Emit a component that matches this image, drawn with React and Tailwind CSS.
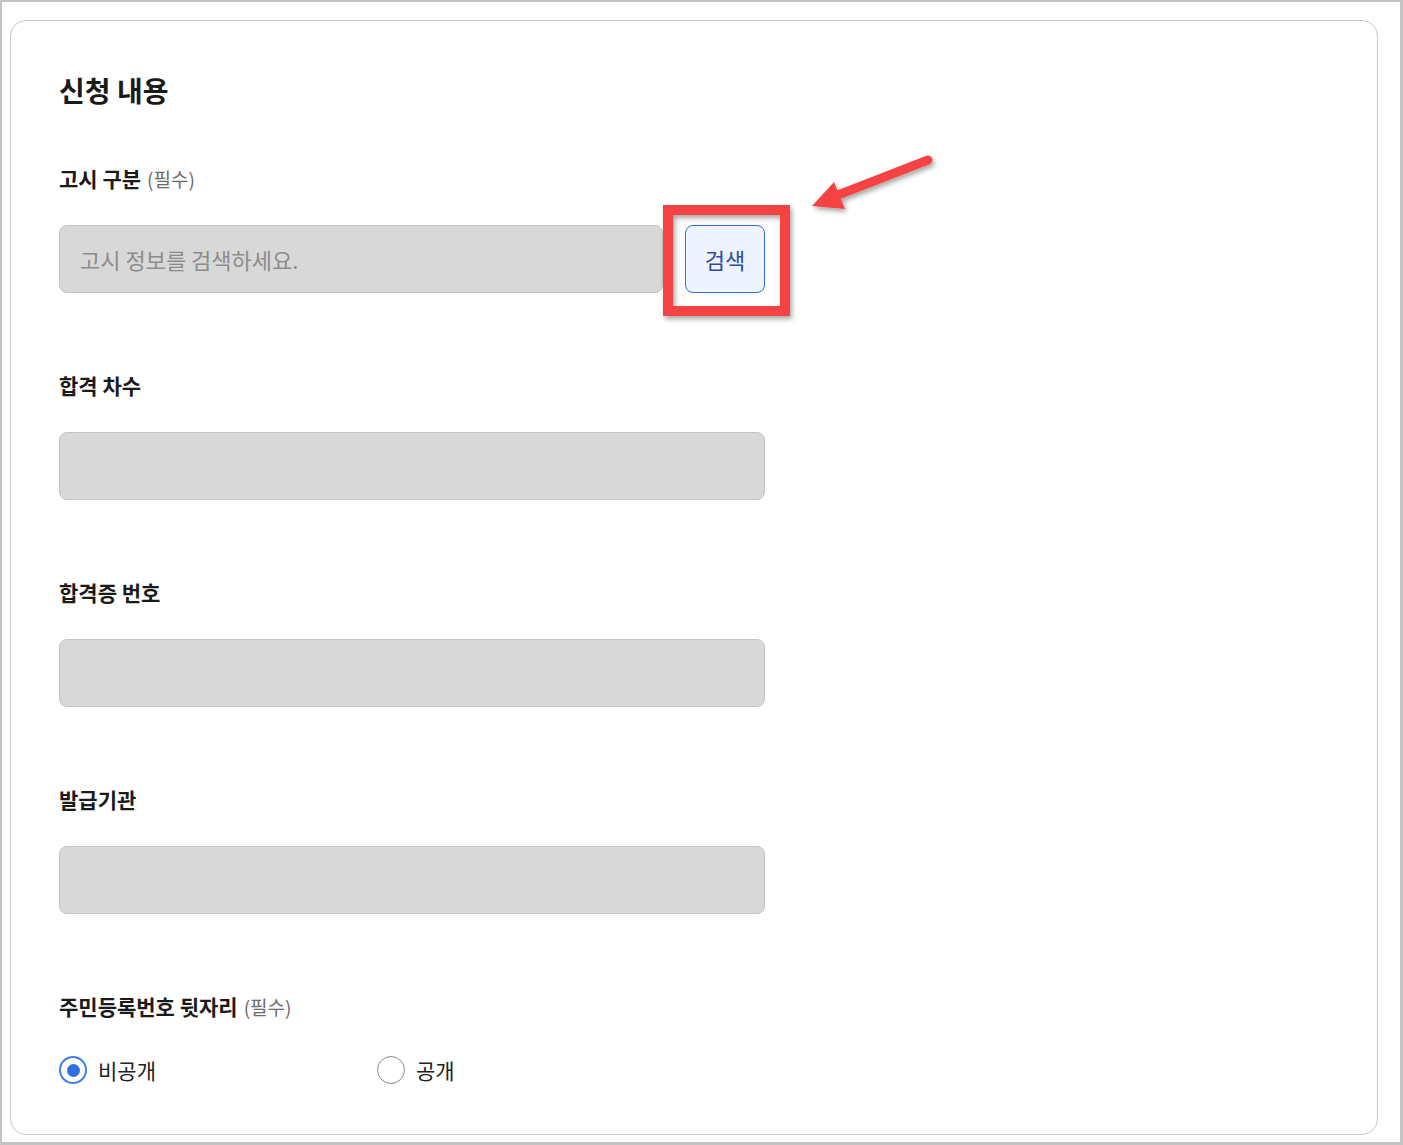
import React from 'react';

const font = { fontFamily: '"Noto Sans CJK KR", "Noto Sans", sans-serif' };

const Label = ({ children, required }) => (
  <div className="flex items-baseline gap-1.5 h-[22px]">
    <span className="text-[21px] font-bold text-[#1a1a1a] leading-[22px]">{children}</span>
    {required && <span className="text-[19px] text-[#6b6b6b] leading-[22px]">(필수)</span>}
  </div>
);

const GrayInput = ({ placeholder }) => (
  <div className="h-[68px] w-full rounded-lg border border-[#c4c4c4] bg-[#d8d8d8] flex items-center px-5">
    {placeholder && <span className="text-[22px] text-[#8c8c8c]">{placeholder}</span>}
  </div>
);

const Radio = ({ checked, label }) => (
  <label className="flex items-center gap-[11px] h-7">
    <span
      className={
        checked
          ? 'w-7 h-7 rounded-full border-2 border-[#3b7ff0] flex items-center justify-center'
          : 'w-7 h-7 rounded-full border-[1.5px] border-[#8a8a8a] flex items-center justify-center'
      }
    >
      {checked && <span className="w-[13px] h-[13px] rounded-full bg-[#2f6fe6]" />}
    </span>
    <span className="text-[21px] leading-7 text-[#222]">{label}</span>
  </label>
);

export default function App() {
  return (
    <div
      style={font}
      className="relative w-[1403px] h-[1145px] bg-white border-t-2 border-l-2 border-r-[3px] border-b-[3px] border-[#c3c3c3] box-border"
    >
      <div className="mt-[18px] ml-2 mr-[22px] h-[1115px] rounded-2xl border border-[#c9c9c9] pl-[48px] pt-[51px]">
        <h2 className="text-[28px] font-bold text-[#1a1a1a] leading-[36px]">신청 내용</h2>

        <div className="w-[706px]">
          {/* 고시 구분 */}
          <div className="mt-[59px]">
            <Label required>고시 구분</Label>
            <div className="mt-[36px] flex gap-[22px]">
              <div className="flex-1">
                <GrayInput placeholder="고시 정보를 검색하세요." />
              </div>
              <button className="w-20 h-[68px] rounded-lg border border-[#2f6fe0] bg-[#edf3ff] text-[22px] text-[#2d4aa8]">
                검색
              </button>
            </div>
          </div>

          <div className="mt-[81px]">
            <Label>합격 차수</Label>
            <div className="mt-[36px]">
              <GrayInput />
            </div>
          </div>

          <div className="mt-[81px]">
            <Label>합격증 번호</Label>
            <div className="mt-[36px]">
              <GrayInput />
            </div>
          </div>

          <div className="mt-[81px]">
            <Label>발급기관</Label>
            <div className="mt-[36px]">
              <GrayInput />
            </div>
          </div>

          <div className="mt-[81px]">
            <Label required>주민등록번호 뒷자리</Label>
            <div className="mt-[39px] flex">
              <div className="w-[318px]">
                <Radio checked label="비공개" />
              </div>
              <Radio label="공개" />
            </div>
          </div>
        </div>
      </div>

      {/* annotation overlay */}
      <svg className="absolute left-0 top-0 pointer-events-none" width="1403" height="1145">
        <defs>
          <filter id="sh" x="-20%" y="-20%" width="140%" height="140%">
            <feDropShadow dx="2" dy="3" stdDeviation="2.5" floodColor="#000" floodOpacity="0.35" />
          </filter>
        </defs>
        <g filter="url(#sh)">
          <rect x="666" y="208" width="117" height="101" fill="none" stroke="#f54343" strokeWidth="10" />
          <line x1="926" y1="158" x2="836" y2="193" stroke="#f54343" strokeWidth="9" strokeLinecap="round" />
          <polygon points="810,204 832,180 843,207" fill="#f54343" />
        </g>
      </svg>
    </div>
  );
}
